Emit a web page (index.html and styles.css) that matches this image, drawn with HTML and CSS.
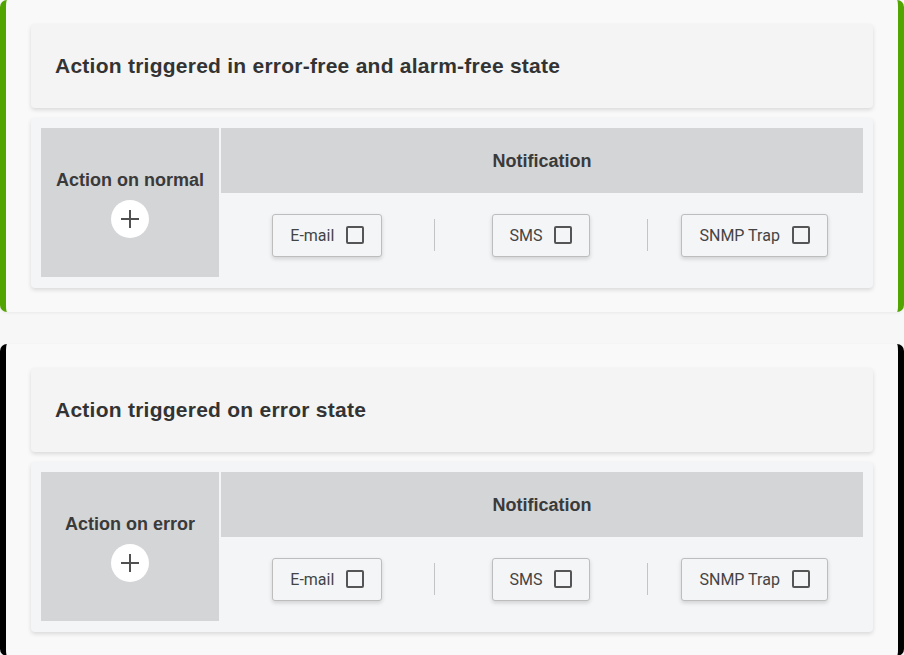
FILE: index.html
```html
<!DOCTYPE html>
<html>
<head>
<meta charset="utf-8">
<link rel="stylesheet" href="styles.css">
</head>
<body>
<div class="page">
  <section class="state-card state-normal">
    <div class="title-card"><h2>Action triggered in error-free and alarm-free state</h2></div>
    <div class="table-card">
      <div class="grid">
        <div class="action-cell">
          <div class="action-label">Action on normal</div>
          <button class="add-btn" aria-label="add"><svg width="20" height="20" viewBox="0 0 20 20"><path d="M10 1v18M1 10h18" stroke="#505050" stroke-width="2" fill="none"/></svg></button>
        </div>
        <div class="notif-head">Notification</div>
        <div class="notif-body">
          <div class="opt"><label class="chk">E-mail <span class="box"></span></label></div>
          <div class="sep"></div>
          <div class="opt"><label class="chk">SMS <span class="box"></span></label></div>
          <div class="sep"></div>
          <div class="opt"><label class="chk">SNMP Trap <span class="box"></span></label></div>
        </div>
      </div>
    </div>
  </section>
  <section class="state-card state-error">
    <div class="title-card"><h2>Action triggered on error state</h2></div>
    <div class="table-card">
      <div class="grid">
        <div class="action-cell">
          <div class="action-label">Action on error</div>
          <button class="add-btn" aria-label="add"><svg width="20" height="20" viewBox="0 0 20 20"><path d="M10 1v18M1 10h18" stroke="#505050" stroke-width="2" fill="none"/></svg></button>
        </div>
        <div class="notif-head">Notification</div>
        <div class="notif-body">
          <div class="opt"><label class="chk">E-mail <span class="box"></span></label></div>
          <div class="sep"></div>
          <div class="opt"><label class="chk">SMS <span class="box"></span></label></div>
          <div class="sep"></div>
          <div class="opt"><label class="chk">SNMP Trap <span class="box"></span></label></div>
        </div>
      </div>
    </div>
  </section>
</div>
</body>
</html>
```

FILE: styles.css
```css
* { box-sizing: border-box; }
html, body { margin: 0; padding: 0; }
body {
  background: #f7f7f7;
  font-family: "Liberation Sans", Arial, sans-serif;
  color: #333;
  overflow: hidden;
}
.page {
  display: flex;
  flex-direction: column;
  gap: 32px;
}
.state-card {
  background: #f9f9f9;
  border-left: 6px solid #52a400;
  border-right: 6px solid #52a400;
  border-radius: 7px;
  padding: 24px 25px 24px;
  display: flex;
  flex-direction: column;
  gap: 10px;
  box-shadow: 0 1px 3px rgba(0,0,0,0.06);
}
.state-error {
  border-left-color: #000;
  border-right-color: #000;
}
.title-card {
  background: #f4f4f4;
  border-radius: 4px;
  height: 84px;
  display: flex;
  align-items: center;
  padding: 0 24px;
  box-shadow: 0 2px 4px rgba(0,0,0,0.13);
}
.title-card h2 {
  margin: 0;
  font-size: 21px;
  font-weight: bold;
  letter-spacing: 0.25px;
  color: #333;
}
.table-card {
  background: #f4f5f7;
  border-radius: 4px;
  padding: 10px 10px 11px;
  box-shadow: 0 2px 4px rgba(0,0,0,0.13);
}
.grid {
  display: grid;
  grid-template-columns: 178px 1fr;
  grid-template-rows: 65px 84px;
  column-gap: 2px;
}
.action-cell {
  grid-row: 1 / 3;
  background: #d4d5d7;
  display: flex;
  flex-direction: column;
  align-items: center;
  justify-content: center;
  gap: 10px;
  padding-top: 3px;
}
.action-label {
  font-size: 18px;
  font-weight: bold;
  line-height: 20px;
  color: #3a3a3a;
}
.add-btn {
  width: 38px;
  height: 38px;
  border-radius: 50%;
  border: none;
  background: #fff;
  padding: 0;
  display: flex;
  align-items: center;
  justify-content: center;
}
.notif-head {
  background: #d4d5d7;
  display: flex;
  align-items: center;
  justify-content: center;
  font-size: 18px;
  font-weight: bold;
  color: #3a3a3a;
  padding-top: 1px;
}
.notif-body {
  display: flex;
  align-items: center;
  padding-right: 2px;
}
.opt {
  flex: 1;
  display: flex;
  justify-content: center;
}
.sep {
  width: 1px;
  height: 32px;
  background: #c4c4c4;
}
.chk {
  display: flex;
  align-items: center;
  gap: 12px;
  height: 43px;
  padding: 0 17px 0 17px;
  border: 1px solid #bdbdbd;
  border-radius: 3px;
  background: #f4f5f7;
  box-shadow: 0 2px 4px rgba(0,0,0,0.15);
  font-family: Roboto, "Liberation Sans", sans-serif;
  font-size: 16px;
  color: #444;
}
.box {
  width: 18px;
  height: 18px;
  border: 2px solid #555;
  border-radius: 2px;
}
```
